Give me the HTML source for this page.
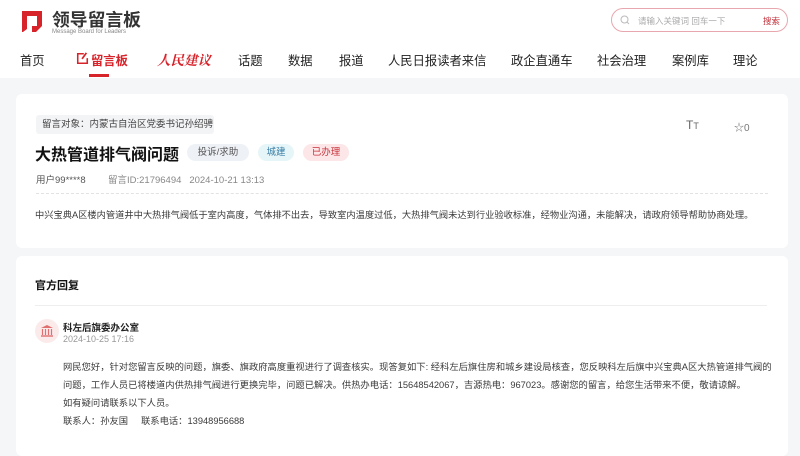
<!DOCTYPE html>
<html><head><meta charset="utf-8"><style>
*{margin:0;padding:0;box-sizing:border-box}
body{width:800px;height:439px;overflow:hidden;background:#f5f6f8;font-family:"Liberation Sans","Noto Sans CJK SC",sans-serif;color:#333;position:relative}
.a{position:absolute;white-space:nowrap}
.hdr{position:absolute;left:0;top:0;width:800px;height:78px;background:#fff}
.nav{font-size:12.3px;color:#222;top:51px}
.card{position:absolute;left:16px;width:772px;background:#fff;border-radius:6px}
.tag{position:absolute;height:17px;line-height:17px;font-size:9.5px;border-radius:9px;text-align:center}
.p{font-size:9.25px;color:#3a3a3a}
</style></head><body>
<div class="hdr"></div>
<svg class="a" style="left:20px;top:9px" width="24" height="25" viewBox="0 0 24 25"><path d="M2 2H22V17L16 23H12V17H17V7H7V20L3 23H2Z" fill="#d7242b"/></svg>
<div class="a" style="left:52px;top:6px;font-size:17.8px;font-weight:bold;color:#333">领导留言板</div>
<div class="a" style="left:52px;top:29px;font-size:6px;color:#888">Message Board for Leaders</div>
<div class="a" style="left:611px;top:8px;width:177px;height:24px;border:1px solid #e8a7ae;border-radius:12px"></div>
<svg class="a" style="left:620px;top:15px" width="10" height="10" viewBox="0 0 10 10"><circle cx="4.5" cy="4.5" r="3.5" fill="none" stroke="#bbb" stroke-width="1"/><path d="M7 7L9 9" stroke="#bbb"/></svg>
<div class="a" style="left:638px;top:15px;font-size:8.5px;color:#aaa">请输入关键词 回车一下</div>
<div class="a" style="left:763px;top:15px;font-size:8.5px;color:#c0303a">搜索</div>
<div class="a nav" style="left:20px">首页</div>
<svg class="a" style="left:76px;top:52px" width="13" height="13" viewBox="0 0 15 15"><path d="M9 2H2V13H13V7" fill="none" stroke="#d7242b" stroke-width="1.8"/><path d="M12 1L7 8" stroke="#d7242b" stroke-width="2"/></svg>
<div class="a nav" style="left:91px;color:#d7242b;font-weight:bold">留言板</div>
<div class="a" style="left:89px;top:74px;width:20px;height:3px;background:#d7242b"></div>
<div class="a nav" style="left:157px;top:49px;color:#d7242b;font-weight:bold;font-style:italic;font-size:13.5px;font-family:'Noto Serif CJK SC',serif">人民建议</div>
<div class="a nav" style="left:238px">话题</div>
<div class="a nav" style="left:288px">数据</div>
<div class="a nav" style="left:339px">报道</div>
<div class="a nav" style="left:388px">人民日报读者来信</div>
<div class="a nav" style="left:511px">政企直通车</div>
<div class="a nav" style="left:597px">社会治理</div>
<div class="a nav" style="left:672px">案例库</div>
<div class="a nav" style="left:733px">理论</div>

<div class="card" style="top:94px;height:154px"></div>
<div class="a" style="left:36px;top:115px;width:178px;height:19px;background:#f3f4f6;border-radius:3px;font-size:9.5px;line-height:19px;padding-left:6px;color:#444">留言对象：内蒙古自治区党委书记孙绍骋</div>
<div class="a" style="left:686px;top:118px;font-size:12px;color:#666">T<span style="font-size:9px">T</span></div>
<div class="a" style="left:734px;top:119px;font-size:10px;color:#777">☆0</div>
<div class="a" style="left:35px;top:141px;font-size:16px;font-weight:bold;color:#111">大热管道排气阀问题</div>
<div class="tag" style="left:187px;top:144px;width:62px;background:#eef1f6;color:#555">投诉/求助</div>
<div class="tag" style="left:258px;top:144px;width:36px;background:#e6f5f7;color:#3a7fa8">城建</div>
<div class="tag" style="left:303px;top:144px;width:46px;background:#fce6e8;color:#c8333b">已办理</div>
<div class="a" style="left:36px;top:172px;font-size:9.5px;color:#555">用户99****8</div>
<div class="a" style="left:108px;top:172px;font-size:9.5px;color:#888">留言ID:21796494&nbsp;&nbsp; 2024-10-21 13:13</div>
<div class="a" style="left:36px;top:193px;width:732px;border-top:1px dashed #e2e2e2"></div>
<div class="a p" style="left:35px;top:207px">中兴宝典A区楼内管道井中大热排气阀低于室内高度，气体排不出去，导致室内温度过低，大热排气阀未达到行业验收标准，经物业沟通，未能解决，请政府领导帮助协商处理。</div>

<div class="card" style="top:256px;height:200px"></div>
<div class="a" style="left:35px;top:277px;font-size:11px;font-weight:bold;color:#111">官方回复</div>
<div class="a" style="left:35px;top:305px;width:732px;border-top:1px solid #eee"></div>
<div class="a" style="left:35px;top:319px;width:24px;height:24px;border-radius:12px;background:#fbeaea"></div>
<svg class="a" style="left:39px;top:323px" width="16" height="16" viewBox="0 0 16 16"><path d="M8 2L2 5H14Z" fill="#e07070"/><path d="M3.5 6V12M6.5 6V12M9.5 6V12M12.5 6V12" stroke="#e07070" stroke-width="1.2"/><path d="M2 13H14" stroke="#e07070" stroke-width="1.4"/></svg>
<div class="a" style="left:63px;top:320px;font-size:9.5px;font-weight:bold;color:#222">科左后旗委办公室</div>
<div class="a" style="left:63px;top:334px;font-size:9px;color:#999">2024-10-25 17:16</div>
<div class="a p" style="left:63px;top:358px;line-height:18px;font-size:9.3px">网民您好，针对您留言反映的问题，旗委、旗政府高度重视进行了调查核实。现答复如下: 经科左后旗住房和城乡建设局核查，您反映科左后旗中兴宝典A区大热管道排气阀的<br>问题，工作人员已将楼道内供热排气阀进行更换完毕，问题已解决。供热办电话：15648542067，吉源热电：967023。感谢您的留言，给您生活带来不便，敬请谅解。<br>如有疑问请联系以下人员。<br>联系人：孙友国&nbsp;&nbsp;&nbsp;&nbsp;&nbsp;联系电话：13948956688</div>
</body></html>
